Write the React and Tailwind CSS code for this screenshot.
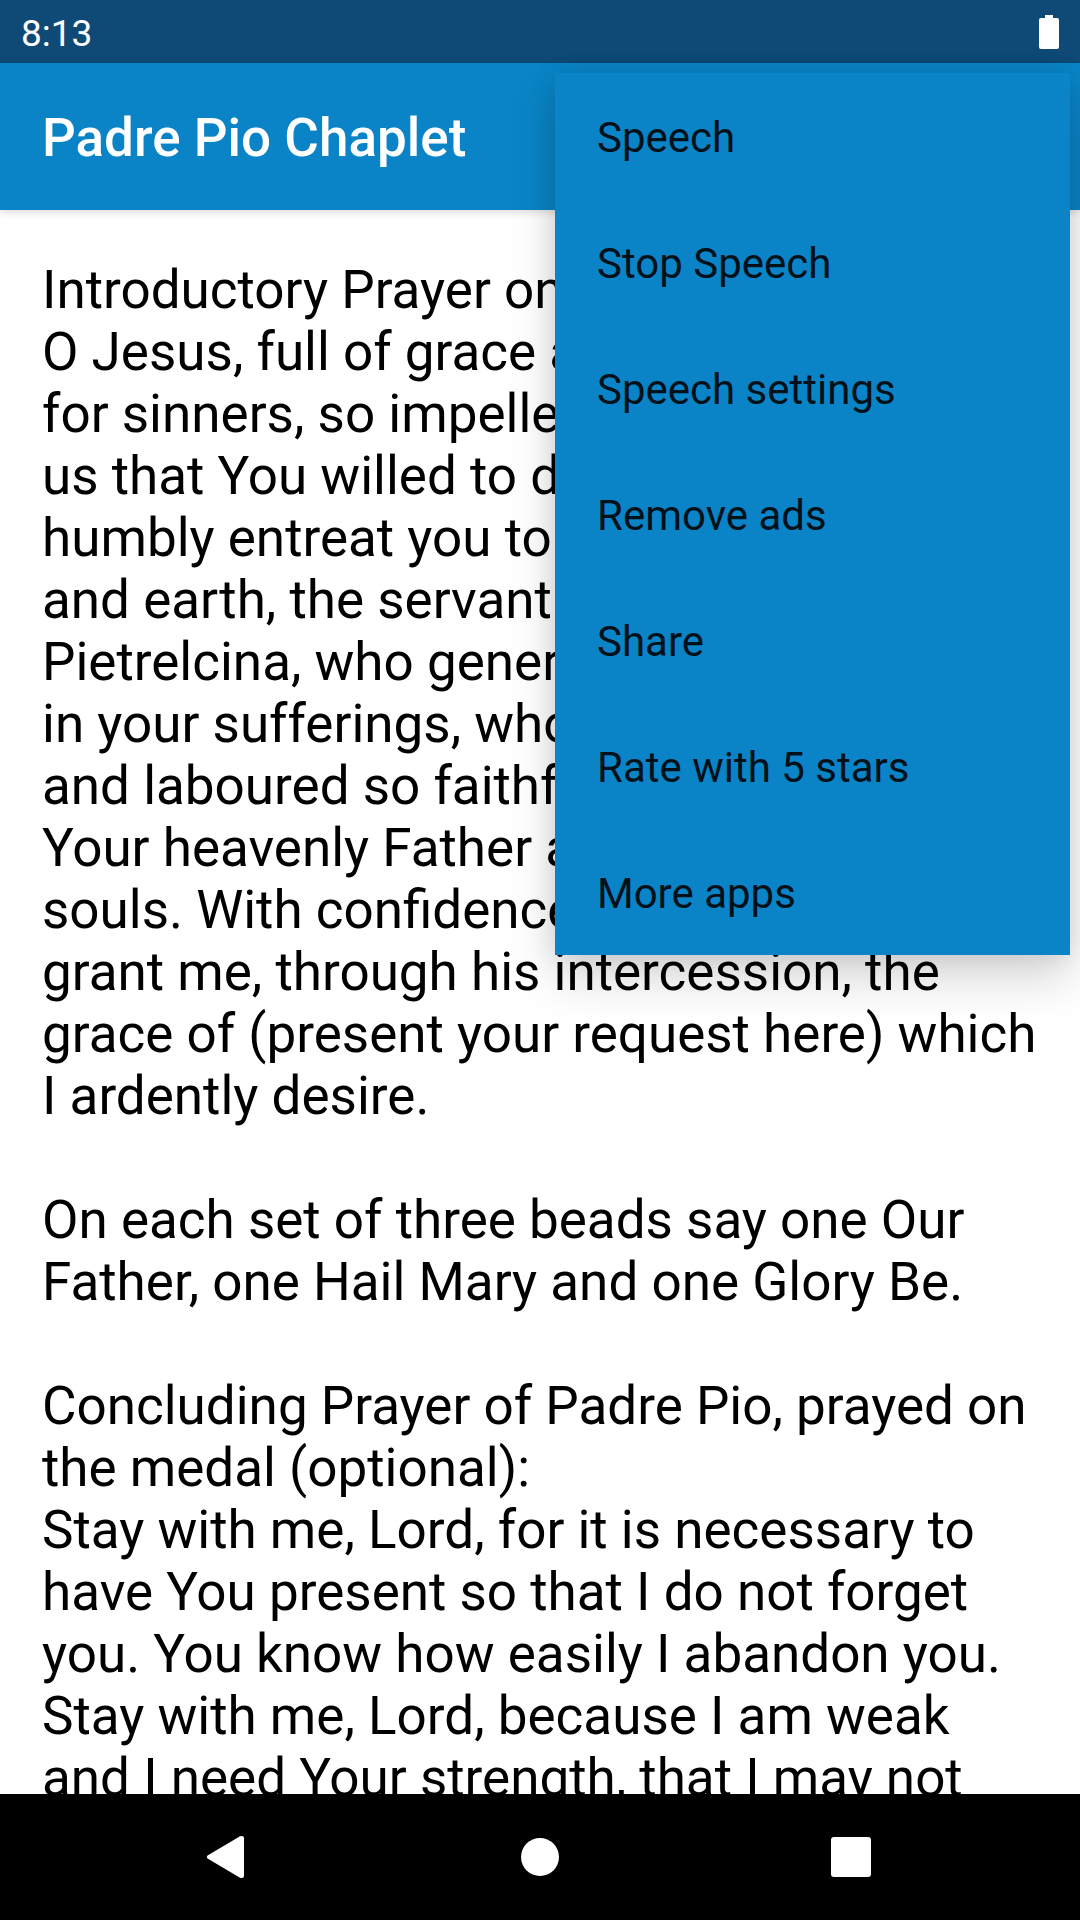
import React from 'react';

const menuItems = [
    'Speech',
    'Stop Speech',
    'Speech settings',
    'Remove ads',
    'Share',
    'Rate with 5 stars',
    'More apps',
];

const StatusBar = () => (
    <div className="flex h-[63px] shrink-0 items-center justify-between bg-[#0f4a77] px-[21px] text-white">
        <span className="pt-1 text-[37px] leading-[44px]">8:13</span>
        <svg className="h-[34px] w-[20px]" viewBox="0 0 20 34" fill="currentColor" role="img" aria-label="Battery full">
            <path d="M6 0h8v3h4a2 2 0 0 1 2 2v27a2 2 0 0 1-2 2H2a2 2 0 0 1-2-2V5a2 2 0 0 1 2-2h4z" />
        </svg>
    </div>
);

const OverflowMenu = () => (
    <div role="menu" className="absolute top-[73px] right-[10px] z-20 flex w-[515px] flex-col bg-[#0a84c6] shadow-[0_24px_44px_rgba(0,0,0,0.16),0_0_24px_rgba(0,0,0,0.1)]">
        {menuItems.map((item) => (
            <button key={item} type="button" role="menuitem" className="h-[126px] px-[42px] pt-[2px] text-left text-[42px] text-[#01111a]">
                {item}
            </button>
        ))}
    </div>
);

const App = () => {
    return (
        <div className="relative flex h-screen flex-col overflow-hidden bg-white font-[Roboto,sans-serif]">
            <StatusBar />

            {/* App bar */}
            <header className="z-10 flex h-[147px] shrink-0 items-center bg-[#0a84c6] px-[42px] pt-1 shadow-[0_2px_8px_rgba(0,0,0,0.15)]">
                <h1 className="text-[53px] font-medium text-white">Padre Pio Chaplet</h1>
            </header>

            {/* Prayer text */}
            <main className="min-h-0 flex-1 overflow-hidden px-[42px] pt-[49px] text-[53px] leading-[62px] text-black">
                <p>
                    Introductory Prayer on the medal:<br />
                    O Jesus, full of grace and charity, victim<br />
                    for sinners, so impelled by love of<br />
                    us that You willed to die for us, I<br />
                    humbly entreat you to glorify in heaven<br />
                    and earth, the servant of God, Pio of<br />
                    Pietrelcina, who generously shared<br />
                    in your sufferings, who loved You<br />
                    and laboured so faithfully for<br />
                    Your heavenly Father and for the good of<br />
                    souls. With confidence, I beg You to<br />
                    grant me, through his intercession, the<br />
                    grace of (present your request here) which<br />
                    I ardently desire.
                </p>
                <p className="mt-[62px]">
                    On each set of three beads say one Our<br />
                    Father, one Hail Mary and one Glory Be.
                </p>
                <p className="mt-[62px]">
                    Concluding Prayer of Padre Pio, prayed on<br />
                    the medal (optional):<br />
                    Stay with me, Lord, for it is necessary to<br />
                    have You present so that I do not forget<br />
                    you. You know how easily I abandon you.<br />
                    Stay with me, Lord, because I am weak<br />
                    and I need Your strength, that I may not
                </p>
            </main>

            {/* System navigation */}
            <nav className="flex h-[126px] shrink-0 items-center justify-center gap-[231px] bg-black text-white">
                <button type="button" aria-label="Back">
                    <svg className="size-[80px]" viewBox="0 0 80 80" fill="currentColor">
                        <path d="M18.5 38.5 51 19.3q4-1.3 4 2v37.400q0 3.3-4 2L18.5 41.5q-1.5-1.5 0-3z" />
                    </svg>
                </button>
                <button type="button" aria-label="Home">
                    <svg className="size-[80px]" viewBox="0 0 80 80" fill="currentColor">
                        <circle cx="40" cy="40" r="19" />
                    </svg>
                </button>
                <button type="button" aria-label="Recent apps">
                    <svg className="size-[80px]" viewBox="0 0 80 80" fill="currentColor">
                        <rect x="20" y="20" width="40" height="40" rx="3" />
                    </svg>
                </button>
            </nav>

            <OverflowMenu />
        </div>
    );
};

export default App;
